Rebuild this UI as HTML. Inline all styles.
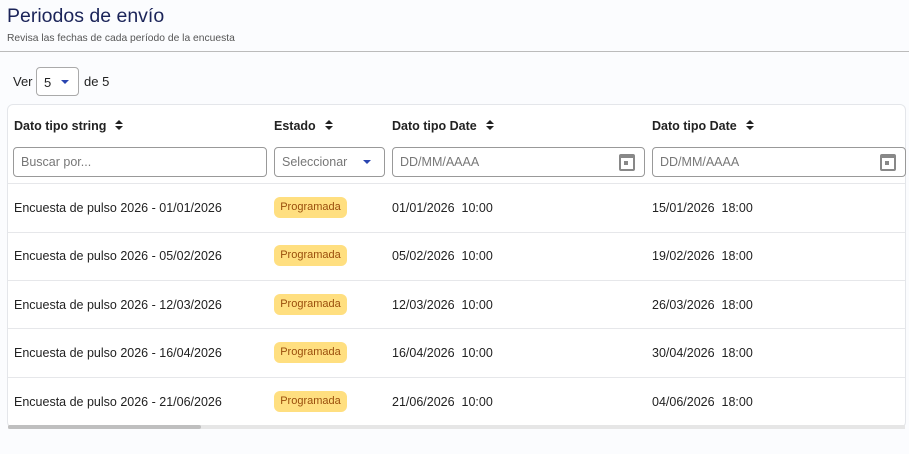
<!DOCTYPE html>
<html><head><meta charset="utf-8"><style>
*{box-sizing:border-box;margin:0;padding:0}
body{width:909px;height:454px;background:#fbfcfe;font-family:"Liberation Sans",sans-serif;position:relative;overflow:hidden;color:#222}
.a{position:absolute}
h1{position:absolute;left:7px;top:5px;font-size:19.5px;font-weight:normal;color:#1b2459}
.sub{left:7px;top:33px;font-size:10.3px;color:#555}
.hr{left:0;top:51px;width:909px;height:1px;background:#bbb}
.sel{left:36px;top:67px;width:43px;height:29px;border:1px solid #aaa;border-radius:4px;background:#fff;font-size:13px;padding:7px 0 0 7px}
.tri{display:inline-block;width:0;height:0;border-left:4px solid transparent;border-right:4px solid transparent;border-top:4px solid #2a45b0}
.card{left:7px;top:104px;width:899px;height:324px;background:#fff;border:1px solid #e4e6ea;border-radius:6px;overflow:hidden}
.th{font-size:12.5px;font-weight:bold;top:119px}
.sort{display:inline-block;vertical-align:middle;margin-left:9px;width:8px;height:11px;position:relative;top:-1px}
.sort:before{content:"";position:absolute;top:0;left:0;border-left:4px solid transparent;border-right:4px solid transparent;border-bottom:4px solid #222}
.sort:after{content:"";position:absolute;top:6px;left:0;border-left:4px solid transparent;border-right:4px solid transparent;border-top:4px solid #222}
.in{top:147px;height:30px;border:1px solid #999;border-radius:4px;background:#fff;font-size:12.5px;color:#777;padding:7px 0 0 7px}
.cal{position:absolute;right:9px;top:6px;width:16px;height:17px;border:2px solid #888;border-top-width:4px;border-radius:2px}
.cal:after{content:"";position:absolute;left:3px;top:3px;width:4px;height:4px;background:#888}
.line{left:8px;width:897px;height:1px;background:#e6e7ea}
.td{font-size:12.5px;color:#222}
.badge{left:274px;width:73px;height:21px;background:#ffdf80;border-radius:6px;color:#9a4e0c;font-size:11px;text-align:center;line-height:21px}
.sb{left:8px;top:425px;width:897px;height:4px;background:#e6e6e6}
.th2{left:8px;top:425px;width:193px;height:4px;background:#bfbfbf;border-radius:2px}
</style></head><body>
<h1>Periodos de envío</h1>
<div class="a sub">Revisa las fechas de cada período de la encuesta</div>
<div class="a hr"></div>
<div class="a" style="left:13px;top:74px;font-size:13px">Ver</div>
<div class="a sel">5 <span class="tri" style="margin-left:6px;vertical-align:3px"></span></div>
<div class="a" style="left:84px;top:74px;font-size:13px">de 5</div>
<div class="a card"></div>
<div class="a th" style="left:14px">Dato tipo string<span class="sort"></span></div>
<div class="a th" style="left:274px">Estado<span class="sort"></span></div>
<div class="a th" style="left:392px">Dato tipo Date<span class="sort"></span></div>
<div class="a th" style="left:652px">Dato tipo Date<span class="sort"></span></div>
<div class="a in" style="left:13px;width:254px">Buscar por...</div>
<div class="a in" style="left:274px;width:111px">Seleccionar<span class="tri" style="position:absolute;right:13px;top:12px"></span></div>
<div class="a in" style="left:392px;width:253px">DD/MM/AAAA<span class="cal"></span></div>
<div class="a in" style="left:652px;width:254px">DD/MM/AAAA<span class="cal"></span></div>
<div class="a line" style="top:183px"></div>
<div class="a line" style="top:232px"></div>
<div class="a line" style="top:280px"></div>
<div class="a line" style="top:328px"></div>
<div class="a line" style="top:377px"></div>

<div class="a td" style="left:14px;top:201px">Encuesta de pulso 2026 - 01/01/2026</div>
<div class="a badge" style="top:197px">Programada</div>
<div class="a td" style="left:392px;top:201px">01/01/2026&nbsp; 10:00</div>
<div class="a td" style="left:652px;top:201px">15/01/2026&nbsp; 18:00</div>

<div class="a td" style="left:14px;top:249px">Encuesta de pulso 2026 - 05/02/2026</div>
<div class="a badge" style="top:245px">Programada</div>
<div class="a td" style="left:392px;top:249px">05/02/2026&nbsp; 10:00</div>
<div class="a td" style="left:652px;top:249px">19/02/2026&nbsp; 18:00</div>

<div class="a td" style="left:14px;top:298px">Encuesta de pulso 2026 - 12/03/2026</div>
<div class="a badge" style="top:294px">Programada</div>
<div class="a td" style="left:392px;top:298px">12/03/2026&nbsp; 10:00</div>
<div class="a td" style="left:652px;top:298px">26/03/2026&nbsp; 18:00</div>

<div class="a td" style="left:14px;top:346px">Encuesta de pulso 2026 - 16/04/2026</div>
<div class="a badge" style="top:342px">Programada</div>
<div class="a td" style="left:392px;top:346px">16/04/2026&nbsp; 10:00</div>
<div class="a td" style="left:652px;top:346px">30/04/2026&nbsp; 18:00</div>

<div class="a td" style="left:14px;top:395px">Encuesta de pulso 2026 - 21/06/2026</div>
<div class="a badge" style="top:391px">Programada</div>
<div class="a td" style="left:392px;top:395px">21/06/2026&nbsp; 10:00</div>
<div class="a td" style="left:652px;top:395px">04/06/2026&nbsp; 18:00</div>

<div class="a sb"></div>
<div class="a th2"></div>
</body></html>
